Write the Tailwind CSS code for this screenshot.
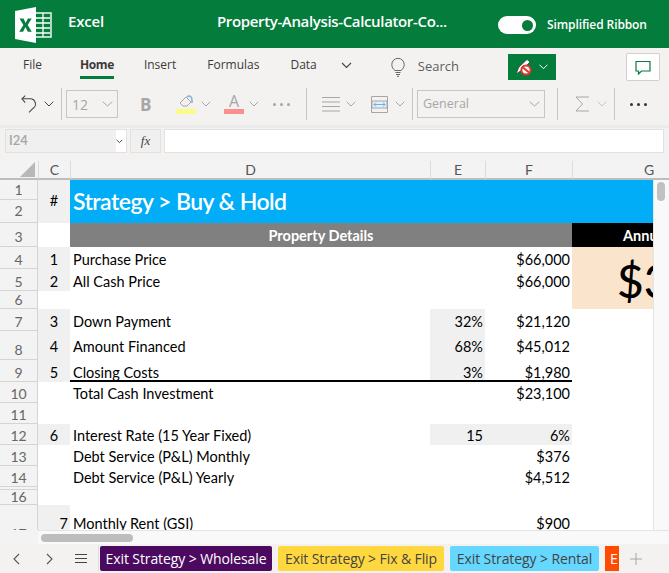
<!DOCTYPE html>
<html lang="en">
<head>
    <meta charset="UTF-8">
    <title>Excel</title>
    <script src="https://cdn.jsdelivr.net/npm/@tailwindcss/browser@4"></script>
</head>
<body class="w-[669px] h-[573px] overflow-hidden bg-[#f3f2f1] font-['Open_Sans','Noto_Sans',sans-serif]">

    <!-- title bar -->
    <header class="h-[48px] bg-[#047c3b] text-white flex items-center">
        <svg class="ml-[14px] mt-[2px] shrink-0" width="38" height="36" viewBox="0 0 38 36">
            <rect x="20" y="6" width="17" height="24" fill="none" stroke="#fff" stroke-width="1.4"/>
            <path d="M22 11h14M22 16h14M22 21h14M22 26h14M29 6v24" stroke="#fff" stroke-width="1.3"/>
            <path d="M1 4 L22 0 V36 L1 32Z" fill="#fff"/>
            <path d="M5.500 11.500h4l2.100 4.600 2.300-4.600h3.800l-4 6.500 4.100 6.700h-4l-2.400-4.800-2.300 4.800H5.200l4.200-6.700z" fill="#047c3b"/>
        </svg>
        <span class="ml-[16px] mb-[5px] text-[15px] font-semibold tracking-[-0.2px]">Excel</span>
        <span class="ml-[113px] mb-[5px] text-[15px] font-semibold tracking-[-0.35px] w-[239px] whitespace-nowrap">Property-Analysis-Calculator-Co...</span>
        <div class="ml-[42px] mt-[2px] w-[38px] h-[18px] rounded-full bg-white flex items-center justify-end pr-[3px]">
            <div class="w-[11px] h-[11px] rounded-full bg-[#047c3b]"></div>
        </div>
        <span class="ml-[11px] mt-[2px] text-[12px] font-semibold tracking-[-0.1px]">Simplified Ribbon</span>
    </header>

    <!-- tabs row -->
    <nav class="h-[38px] flex items-center text-[12px] text-[#3b3a39]">
        <span class="ml-[23px] mb-[5px]">File</span>
        <div class="ml-[38px] mb-[5px] relative">
            <span class="font-bold tracking-[-0.4px]">Home</span>
            <div class="absolute left-0 right-0 top-[20px] h-[3px] bg-[#047c3b]"></div>
        </div>
        <span class="ml-[30px] mb-[5px]">Insert</span>
        <span class="ml-[31px] mb-[5px]">Formulas</span>
        <span class="ml-[31px] mb-[5px]">Data</span>
        <svg class="ml-[24px] mb-[4px]" width="11" height="7" viewBox="0 0 11 7"><path d="M1 1l4.500 4.500L10 1" fill="none" stroke="#444" stroke-width="1.100"/></svg>
        <svg class="ml-[38px]" width="16" height="20" viewBox="0 0 16 20" fill="none" stroke="#666" stroke-width="1">
            <path d="M5 13.500C3 12 1.800 10 1.800 7.500a6.200 6.200 0 0 1 12.400 0c0 2.500-1.200 4.500-3.200 6z"/>
            <path d="M5.500 15.500h5M6 17.500h4M7 19.300h2"/>
        </svg>
        <span class="ml-[12px] text-[13px] text-[#605e5c]">Search</span>
        <div class="ml-[49px] w-[48px] h-[26px] bg-[#047c3b] flex items-center justify-center gap-[7px]">
            <svg width="17" height="18" viewBox="0 0 17 18">
                <path d="M1 16 L4 9 L12 1.500 L15 4 L7 12Z" fill="#fff" stroke="#333" stroke-width=".7"/>
                <circle cx="11" cy="12" r="4.600" fill="#fff" stroke="#e0352b" stroke-width="2"/>
                <path d="M8 9.500l6 5" stroke="#e0352b" stroke-width="2"/>
            </svg>
            <svg width="9" height="6" viewBox="0 0 9 6"><path d="M.5.700l4 4 4-4" fill="none" stroke="#fff" stroke-width="1"/></svg>
        </div>
        <div class="ml-auto mr-[9px] w-[34px] h-[28px] bg-white border border-[#d2d0ce] rounded-[2px] flex items-center justify-center">
            <svg width="16" height="15" viewBox="0 0 16 15"><path d="M1 1.500h14v9.500H6.500L3.500 14v-3H1z" fill="none" stroke="#047c3b" stroke-width="1.200"/></svg>
        </div>
    </nav>

    <!-- toolbar -->
    <div class="h-[39px] pb-[3px] flex items-center text-[#a6a6a6]">
        <svg class="ml-[21px]" width="16" height="20" viewBox="0 0 17 20" fill="none" stroke="#444" stroke-width="1.100">
            <path d="M1 4.500h9a5.500 5.500 0 0 1 3 10L8.500 19"/><path d="M4.500 1L1 4.500 4.500 8.500"/>
        </svg>
        <svg class="ml-[7px]" width="10" height="6" viewBox="0 0 10 6"><path d="M.7.700L5 5 9.300.7" fill="none" stroke="#444" stroke-width="1"/></svg>
        <div class="ml-[7px] w-px h-[32px] bg-[#c8c6c4]"></div>
        <div class="ml-[4px] w-[52px] h-[28px] border border-[#c8c6c4] bg-[#f3f2f1] flex items-center justify-between pl-[5px] pr-[4px] text-[14px]">
            <span>12</span>
            <svg width="11" height="6" viewBox="0 0 11 6"><path d="M.7.700l4.800 4.300L10.300.7" fill="none" stroke="#a6a6a6"/></svg>
        </div>
        <span class="ml-[22px] w-[12px] text-[17px] font-bold leading-none text-[#a6a6a6]">B</span>
        <div class="ml-[24px] flex flex-col items-center w-[20px]">
            <svg width="18" height="14" viewBox="0 0 18 14" fill="none"><path d="M3 8l6-6 5 5-4 4H6z" stroke="#a6a6a6"/><path d="M10 2c2-2 5-1 5 3v3" stroke="#7fb2dc" stroke-width="1.500"/></svg>
            <div class="w-[20px] h-[5px] bg-[#fbfb8a]"></div>
        </div>
        <svg class="ml-[5px]" width="10" height="6" viewBox="0 0 10 6"><path d="M.7.700L5 5 9.300.7" fill="none" stroke="#a6a6a6"/></svg>
        <div class="ml-[13px] flex flex-col items-center w-[20px] -mt-[1px]">
            <span class="text-[16px] leading-[15px] text-[#a6a6a6]">A</span>
            <div class="w-[20px] h-[5px] bg-[#fb8f8f]"></div>
        </div>
        <svg class="ml-[5px]" width="10" height="6" viewBox="0 0 10 6"><path d="M.7.700L5 5 9.300.7" fill="none" stroke="#a6a6a6"/></svg>
        <div class="ml-[14px] flex gap-[4px]">
            <i class="block w-[3px] h-[3px] rounded-full bg-[#a6a6a6]"></i><i class="block w-[3px] h-[3px] rounded-full bg-[#a6a6a6]"></i><i class="block w-[3px] h-[3px] rounded-full bg-[#a6a6a6]"></i>
        </div>
        <div class="ml-[16px] w-px h-[32px] bg-[#c8c6c4]"></div>
        <svg class="ml-[15px]" width="18" height="18" viewBox="0 0 18 18" stroke="#a6a6a6"><path d="M0 2.500h18M0 7h18M0 11.500h18M0 16h18"/></svg>
        <svg class="ml-[6px]" width="10" height="6" viewBox="0 0 10 6"><path d="M.7.700L5 5 9.300.7" fill="none" stroke="#a6a6a6"/></svg>
        <svg class="ml-[15px]" width="17" height="17" viewBox="0 0 17 17" fill="none">
            <path d="M.5.500h16v16H.5z" stroke="#a6a6a6"/><path d="M1 5h15v7H1z" fill="#e4f0fa" stroke="#a6a6a6"/>
            <path d="M3 8.500h11M3 8.500l2-2M3 8.500l2 2M14 8.500l-2-2M14 8.500l-2 2" stroke="#6cb0e4"/>
        </svg>
        <svg class="ml-[7px]" width="10" height="6" viewBox="0 0 10 6"><path d="M.7.700L5 5 9.300.7" fill="none" stroke="#a6a6a6"/></svg>
        <div class="ml-[7px] w-px h-[32px] bg-[#c8c6c4]"></div>
        <div class="ml-[4px] w-[128px] h-[28px] border border-[#c8c6c4] bg-[#f3f2f1] flex items-center justify-between pl-[5px] pr-[4px] text-[12.500px]">
            <span>General</span>
            <svg width="11" height="6" viewBox="0 0 11 6"><path d="M.7.700l4.800 4.300L10.300.7" fill="none" stroke="#a6a6a6"/></svg>
        </div>
        <div class="ml-[12px] w-px h-[32px] bg-[#c8c6c4]"></div>
        <svg class="ml-[17px]" width="15" height="16" viewBox="0 0 15 16" fill="none" stroke="#a6a6a6"><path d="M14 1H1l6.500 7L1 15h13"/></svg>
        <svg class="ml-[7px]" width="10" height="6" viewBox="0 0 10 6"><path d="M.7.700L5 5 9.300.7" fill="none" stroke="#c8c6c4"/></svg>
        <div class="ml-[7px] w-px h-[32px] bg-[#c8c6c4]"></div>
        <div class="ml-[15px] flex gap-[4px]">
            <i class="block w-[3px] h-[3px] rounded-full bg-[#333]"></i><i class="block w-[3px] h-[3px] rounded-full bg-[#333]"></i><i class="block w-[3px] h-[3px] rounded-full bg-[#333]"></i>
        </div>
    </div>

    <!-- formula bar -->
    <div class="h-[36px] bg-[#f3f2f1] border-t-[3px] border-[#ebebeb] flex items-start pt-[1px]">
        <div class="ml-[5px] w-[122px] h-[24px] bg-white border border-[#e1e1e1] flex items-center justify-between pr-[3px]">
            <span class="w-[112px] h-full bg-[#f0f0f0] flex items-center pl-[3px] text-[13px] font-semibold text-[#a6a6a6] font-['Lato',sans-serif]">I24</span>
            <svg width="7" height="5" viewBox="0 0 7 5"><path d="M.6.800l2.900 2.900L6.400.8" fill="none" stroke="#444" stroke-width="1"/></svg>
        </div>
        <div class="ml-[3px] w-[31px] h-[24px] bg-[#f0f0f0] border border-[#e1e1e1] flex items-center justify-center font-['Liberation_Serif',serif] italic text-[13px] text-[#444]">fx</div>
        <div class="ml-[3px] w-[500px] h-[24px] bg-white border border-[#e1e1e1]"></div>
    </div>

    <!-- sheet -->
    <div class="relative h-[383px] bg-[#f3f3f3] font-['Lato',sans-serif] text-black overflow-hidden">
        <div class="w-[669px] h-[369px] overflow-hidden bg-white">
            <div class="grid grid-cols-[38px_32px_360px_55px_87px_97px] grid-rows-[19px_20px_23px_24px_22px_22px_18px_22px_29px_22px_21px_21px_21px_21px_21px_3px_15px_45px] text-[14.500px] leading-none">

                <!-- column letters -->
                <div class="bg-[#f3f3f3] border-b-2 border-[#bdbdbd] relative overflow-hidden">
                    <div class="absolute right-[3px] bottom-[1px] w-0 h-0 border-l-[15px] border-l-transparent border-b-[15px] border-b-[#b8b8b8]"></div>
                </div>
                <div class="bg-[#f3f3f3] border-b-2 border-b-[#bdbdbd] border-l border-l-[#dcdcdc] flex items-center justify-center text-[14px] text-[#555]">C</div>
                <div class="bg-[#f3f3f3] border-b-2 border-b-[#bdbdbd] border-l border-l-[#dcdcdc] flex items-center justify-center text-[14px] text-[#555]">D</div>
                <div class="bg-[#f3f3f3] border-b-2 border-b-[#bdbdbd] border-l border-l-[#dcdcdc] flex items-center justify-center text-[14px] text-[#555]">E</div>
                <div class="bg-[#f3f3f3] border-b-2 border-b-[#bdbdbd] border-l border-l-[#dcdcdc] flex items-center justify-center text-[14px] text-[#555]">F</div>
                <div class="bg-[#f3f3f3] border-b-2 border-b-[#bdbdbd] border-l border-l-[#dcdcdc] flex items-center justify-center pl-[56px] text-[14px] text-[#555]">G</div>

                <!-- rows 1-2 -->
                <div class="bg-[#f3f3f3] border-b border-r border-[#d4d4d4] flex items-center justify-center text-[#666] text-[14px]">1</div>
                <div class="row-span-2 bg-[#f0f0f0] flex items-center justify-center">#</div>
                <div class="row-span-2 col-span-4 bg-[#00adf6] flex items-center pl-[3px] text-white text-[23px] tracking-[-0.55px] font-semibold">Strategy &gt; Buy &amp; Hold</div>
                <div class="bg-[#f3f3f3] border-b border-r border-[#d4d4d4] flex items-center justify-center text-[#666] text-[14px]">2</div>

                <!-- row 3 -->
                <div class="bg-[#f3f3f3] border-b border-r border-[#d4d4d4] flex items-center justify-center pt-[4px] text-[#666] text-[14px]">3</div>
                <div class="bg-white"></div>
                <div class="col-span-3 bg-[#808080] text-white font-bold flex items-center justify-center pt-[2px]">Property Details</div>
                <div class="bg-black text-white font-bold flex items-center pl-[51px] pt-[2px] whitespace-nowrap overflow-hidden">Annual</div>

                <!-- row 4 -->
                <div class="bg-[#f3f3f3] border-b border-r border-[#d4d4d4] flex items-center justify-center pt-[4px] text-[#666] text-[14px]">4</div>
                <div class="bg-[#f0f0f0] flex items-center justify-center pt-[4px]">1</div>
                <div class="flex items-center pl-[3px] pt-[4px]">Purchase Price</div>
                <div></div>
                <div class="flex items-center justify-end pr-[2px] pt-[4px]">$66,000</div>
                <div class="row-span-3 bg-[#fbe4cc] flex items-center pl-[45px] pt-[6px] text-[46px] font-medium whitespace-nowrap overflow-hidden">$3</div>

                <!-- row 5 -->
                <div class="bg-[#f3f3f3] border-b border-r border-[#d4d4d4] flex items-center justify-center pt-[4px] text-[#666] text-[14px]">5</div>
                <div class="bg-[#f0f0f0] flex items-center justify-center pt-[4px]">2</div>
                <div class="flex items-center pl-[3px] pt-[4px]">All Cash Price</div>
                <div></div>
                <div class="flex items-center justify-end pr-[2px] pt-[4px]">$66,000</div>

                <!-- row 6 -->
                <div class="bg-[#f3f3f3] border-b border-r border-[#d4d4d4] flex items-center justify-center text-[#666] text-[14px]">6</div>
                <div></div><div></div><div></div><div></div>

                <!-- row 7 -->
                <div class="bg-[#f3f3f3] border-b border-r border-[#d4d4d4] flex items-center justify-center pt-[4px] text-[#666] text-[14px]">7</div>
                <div class="bg-[#f0f0f0] flex items-center justify-center pt-[4px]">3</div>
                <div class="flex items-center pl-[3px] pt-[4px]">Down Payment</div>
                <div class="bg-[#f0f0f0] flex items-center justify-end pr-[2px] pt-[4px]">32%</div>
                <div class="flex items-center justify-end pr-[2px] pt-[4px]">$21,120</div>
                <div></div>

                <!-- row 8 -->
                <div class="bg-[#f3f3f3] border-b border-r border-[#d4d4d4] flex items-end pb-[2px] justify-center text-[#666] text-[14px]">8</div>
                <div class="bg-[#f0f0f0] flex items-center justify-center pt-[3px]">4</div>
                <div class="flex items-center pl-[3px] pt-[3px]">Amount Financed</div>
                <div class="bg-[#f0f0f0] flex items-center justify-end pr-[2px] pt-[3px]">68%</div>
                <div class="flex items-center justify-end pr-[2px] pt-[3px]">$45,012</div>
                <div></div>

                <!-- row 9 -->
                <div class="bg-[#f3f3f3] border-b border-r border-[#d4d4d4] flex items-center justify-center pt-[4px] text-[#666] text-[14px]">9</div>
                <div class="bg-[#f0f0f0] flex items-center justify-center pt-[4px]">5</div>
                <div class="flex items-center pl-[3px] pt-[6px] border-b-2 border-black">Closing Costs</div>
                <div class="bg-[#f0f0f0] flex items-center justify-end pr-[2px] pt-[6px] border-b-2 border-black">3%</div>
                <div class="flex items-center justify-end pr-[2px] pt-[6px] border-b-2 border-black">$1,980</div>
                <div></div>

                <!-- row 10 -->
                <div class="bg-[#f3f3f3] border-b border-r border-[#d4d4d4] flex items-center justify-center pt-[4px] text-[#666] text-[14px]">10</div>
                <div></div>
                <div class="flex items-center pl-[3px] pt-[4px]">Total Cash Investment</div>
                <div></div>
                <div class="flex items-center justify-end pr-[2px] pt-[4px]">$23,100</div>
                <div></div>

                <!-- row 11 -->
                <div class="bg-[#f3f3f3] border-b border-r border-[#d4d4d4] flex items-center justify-center pt-[4px] text-[#666] text-[14px]">11</div>
                <div></div><div></div><div></div><div></div><div></div>

                <!-- row 12 -->
                <div class="bg-[#f3f3f3] border-b border-r border-[#d4d4d4] flex items-center justify-center pt-[4px] text-[#666] text-[14px]">12</div>
                <div class="bg-[#f0f0f0] flex items-center justify-center pt-[4px]">6</div>
                <div class="flex items-center pl-[3px] pt-[4px]">Interest Rate (15 Year Fixed)</div>
                <div class="bg-[#f0f0f0] flex items-center justify-end pr-[2px] pt-[4px]">15</div>
                <div class="bg-[#f0f0f0] flex items-center justify-end pr-[2px] pt-[4px]">6%</div>
                <div></div>

                <!-- row 13 -->
                <div class="bg-[#f3f3f3] border-b border-r border-[#d4d4d4] flex items-center justify-center pt-[4px] text-[#666] text-[14px]">13</div>
                <div></div>
                <div class="flex items-center pl-[3px] pt-[4px]">Debt Service (P&amp;L) Monthly</div>
                <div></div>
                <div class="flex items-center justify-end pr-[2px] pt-[4px]">$376</div>
                <div></div>

                <!-- row 14 -->
                <div class="bg-[#f3f3f3] border-b border-r border-[#d4d4d4] flex items-center justify-center pt-[4px] text-[#666] text-[14px]">14</div>
                <div></div>
                <div class="flex items-center pl-[3px] pt-[4px]">Debt Service (P&amp;L) Yearly</div>
                <div></div>
                <div class="flex items-center justify-end pr-[2px] pt-[4px]">$4,512</div>
                <div></div>

                <!-- row 15 hidden -->
                <div class="bg-[#f3f3f3] border-b border-r border-[#d4d4d4]"></div>
                <div class="col-span-5"></div>

                <!-- row 16 -->
                <div class="bg-[#f3f3f3] border-b border-r border-[#d4d4d4] flex items-center justify-center text-[#666] text-[14px]">16</div>
                <div class="col-span-5"></div>

                <!-- row 17 -->
                <div class="bg-[#f3f3f3] border-r border-[#d4d4d4] flex items-start justify-center pt-[22px] text-[#666] text-[14px]">17</div>
                <div class="bg-[#f0f0f0] flex items-start justify-end pt-[12px] pr-[2px]">7</div>
                <div class="flex items-start pl-[3px] pt-[12px]">Monthly Rent (GSI)</div>
                <div></div>
                <div class="flex items-start justify-end pt-[12px] pr-[2px]">$900</div>
                <div></div>
            </div>
        </div>

        <!-- vertical scrollbar -->
        <div class="absolute left-[653px] top-[19px] w-[16px] h-[350px] bg-[#f9f9f9] border-l border-[#e4e4e4]">
            <div class="ml-[3px] mt-[2px] w-[8px] h-[19px] rounded-full bg-[#c1c1c1]"></div>
        </div>

        <!-- horizontal scrollbar -->
        <div class="absolute left-[38px] top-[369px] w-[631px] h-[14px] bg-[#f9f9f9] border-t border-[#e4e4e4]">
            <div class="ml-[3px] mt-[3px] w-[92px] h-[8px] rounded-full bg-[#bdbdbd]"></div>
        </div>
    </div>

    <!-- sheet tabs -->
    <footer class="h-[29px] bg-[#f3f2f1] flex items-center overflow-hidden text-[14px]">
        <svg class="ml-[13px]" width="7" height="12" viewBox="0 0 7 12"><path d="M6 1L1 6l5 5" fill="none" stroke="#555" stroke-width="1.100"/></svg>
        <svg class="ml-[26px]" width="7" height="12" viewBox="0 0 7 12"><path d="M1 1l5 5-5 5" fill="none" stroke="#555" stroke-width="1.100"/></svg>
        <svg class="ml-[22px]" width="12" height="11" viewBox="0 0 12 11" stroke="#444"><path d="M0 1.500h12M0 5.500h12M0 9.500h12"/></svg>
        <div class="ml-[11px] w-px h-[27px] bg-[#e1dfdd]"></div>
        <div class="ml-[1px] h-[25px] w-[172px] rounded-[2px] bg-[#4b0a60] text-white flex items-center justify-center whitespace-nowrap tracking-[-0.1px]">Exit Strategy &gt; Wholesale</div>
        <div class="ml-[6px] h-[25px] w-[166px] rounded-[2px] bg-[#ffd83f] text-[#444] flex items-center justify-center whitespace-nowrap tracking-[-0.1px]">Exit Strategy &gt; Fix &amp; Flip</div>
        <div class="ml-[6px] h-[25px] w-[149px] rounded-[2px] bg-[#66d8ff] text-[#444] flex items-center justify-center whitespace-nowrap tracking-[-0.1px]">Exit Strategy &gt; Rental</div>
        <div class="ml-[6px] h-[25px] w-[14px] bg-[#ff4a00] text-white pl-[5px] flex items-center overflow-hidden">E</div>
        <svg class="ml-[11px]" width="12" height="12" viewBox="0 0 12 12" stroke="#a6a6a6"><path d="M6 0v12M0 6h12"/></svg>
    </footer>
</body>
</html>
